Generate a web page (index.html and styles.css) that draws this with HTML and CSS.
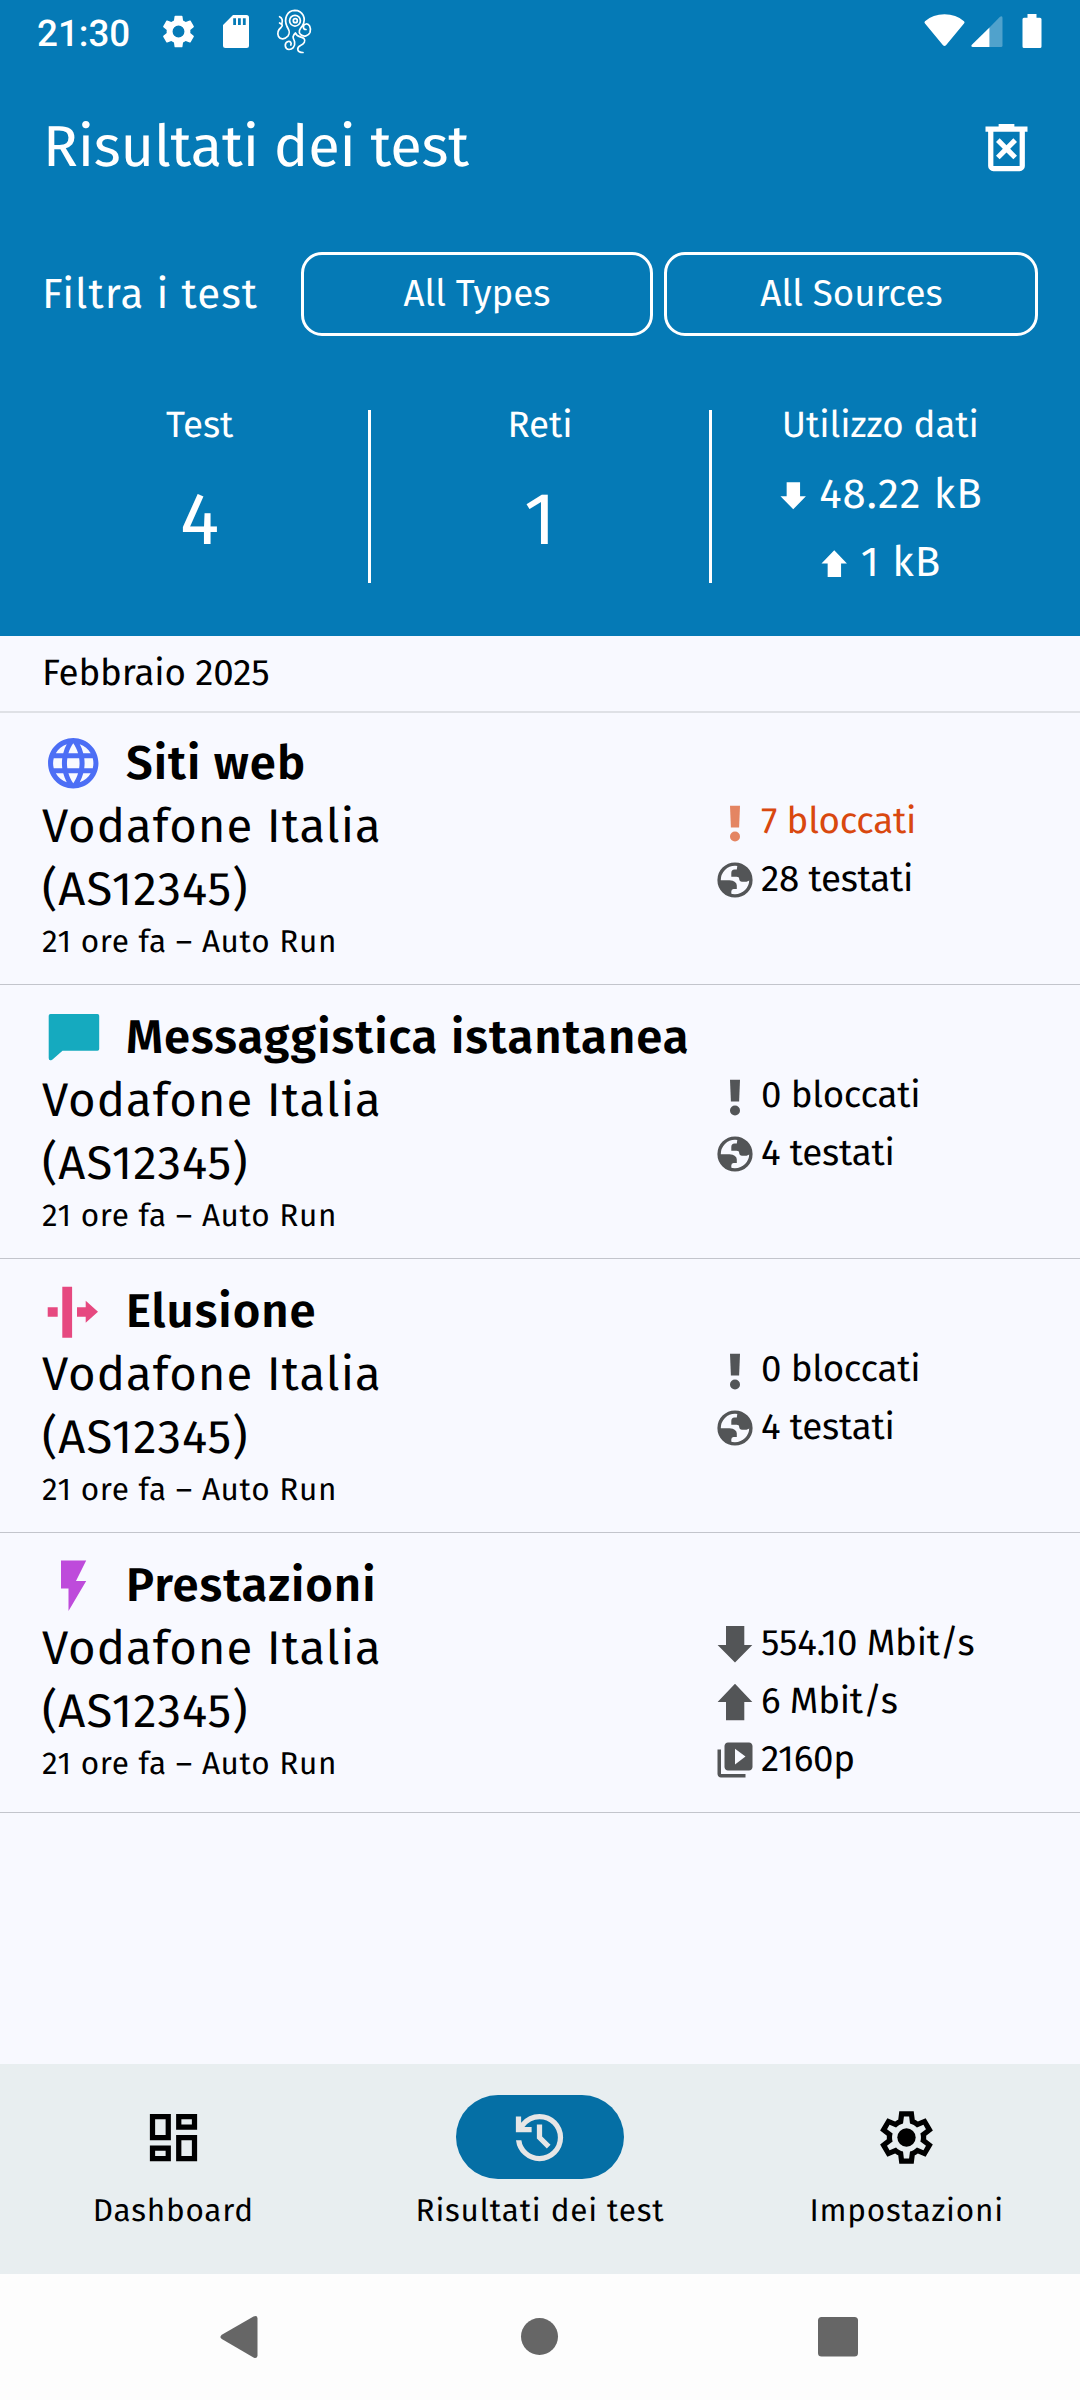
FILE: index.html
```html
<!DOCTYPE html>
<html lang="it">
<head>
<meta charset="utf-8">
<title>Risultati dei test</title>
<link rel="stylesheet" href="styles.css">
</head>
<body>
<svg class="sprite" aria-hidden="true">
  <symbol id="excl" viewBox="0 0 42 42"><path d="M16 4.700h10l-.9 21.800h-8.200z"/><circle cx="21" cy="35.500" r="5"/></symbol>
  <symbol id="world" viewBox="0 0 42 42"><circle cx="21" cy="21" r="15.900" fill="none" stroke="currentColor" stroke-width="3.400"/><path d="M23.500 5.500 22.800 10.600H20.500Q17.300 11 17.300 14V17.700H22.500Q25.200 17.700 25.200 20Q25.500 22.800 28 22.800H32.500L36.500 21V17L33 9.500L28 6.200ZM5 21.300H15.500Q22.800 22 22.800 26.500V30H19.500Q17.300 30.300 17.300 32.500V37L11 34L6 27Z"/></symbol>
  <symbol id="down" viewBox="0 0 42 42"><path d="M12 3h18.300v19H38.300L21 39.500 3.600 22H12z"/></symbol>
  <symbol id="up" viewBox="0 0 42 42"><path d="M12 39.200h18.300V21H38.300L21 2.700 3.600 21H12z"/></symbol>
</svg>

<header class="header">
  <div class="status">
    <span class="clock">21:30</span>
    <svg class="st-gear" viewBox="2 2 20 20"><path d="M19.140 12.940c.04-.3.06-.61.06-.94 0-.32-.02-.64-.07-.94l2.030-1.580c.18-.14.23-.41.12-.61l-1.920-3.320c-.12-.22-.37-.29-.59-.22l-2.390.96c-.5-.38-1.030-.7-1.620-.94l-.36-2.540c-.04-.24-.24-.41-.48-.41h-3.840c-.24 0-.43.17-.47.41l-.36 2.540c-.59.24-1.130.57-1.620.94l-2.390-.96c-.22-.08-.47 0-.59.22L2.740 8.870c-.12.21-.08.47.12.61l2.030 1.580c-.05.3-.09.63-.09.94s.02.64.07.94l-2.030 1.580c-.18.14-.23.41-.12.61l1.920 3.320c.12.22.37.29.59.22l2.390-.96c.5.38 1.030.7 1.620.94l.36 2.540c.05.24.24.41.48.41h3.840c.24 0 .44-.17.47-.41l.36-2.540c.59-.24 1.130-.56 1.620-.94l2.390.96c.22.08.47 0 .59-.22l1.920-3.320c.12-.22.07-.47-.12-.61l-2.010-1.580zM12 15.600A3.600 3.600 0 1 1 12 8.400a3.600 3.600 0 0 1 0 7.200z"/></svg>
    <svg class="st-sd" viewBox="0 0 26 33"><path fill-rule="evenodd" d="M10 0H23.500Q26 0 26 2.500V30.500Q26 33 23.500 33H2.500Q0 33 0 30.500V10ZM10.200 3.300V10H13V3.300ZM15 3.300V10H17.800V3.300ZM19.900 3.300V10H22.700V3.300Z"/></svg>
    <svg class="st-octo" viewBox="0 0 35 45"><g fill="none" stroke="currentColor" stroke-width="1.700" stroke-linecap="round"><path d="M2.600 14C6 16 5.800 16.500 4 18.500C1 21 0 24 1.500 27.500C3.500 31 8 30.500 11 27C14 23 11.500 20.500 10 17.500C6.500 10 10 1.500 17.800 1.300C26 1.300 29.500 10 25.500 16.500C22.500 20.500 21 23 23.500 25.500C27 28.300 31.500 27 33 23.500C34.500 18.500 32 14.500 29 15C25.500 15.500 25.500 20.500 29 20.500" class="arms"/><circle cx="18" cy="11.700" r="5.400"/><circle cx="18.300" cy="11.700" r="2"/><path d="M18.500 24C14 28 17 29.500 17.600 33C18.500 38 15 40.500 12 40.500C7.500 40 7 34 11 32.500C13.500 32 14.800 34 13.800 36M18.500 24C20 28.500 24 27 27 29.500C29 32 27 35 23.500 36.500C19.500 38.500 19.500 43.500 26 43.500M2.600 7.700Q6.500 9.500 4.800 15"/></g></svg>
    <span class="spacer"></span>
    <svg class="st-wifi" viewBox="0 0 41 33"><path d="M1 7.200Q9 .3 20.500.3T40 7.200Q41 8 40.200 9.200L22 31.200Q20.500 32.800 19 31.200L.8 9.200Q0 8 1 7.200Z"/></svg>
    <svg class="st-cell" viewBox="0 0 32 32"><path opacity=".3" d="M18.500 11.500 29 .8Q31.500-.8 31.500 2V29.500Q31.500 31 30 31H18.500Z"/><path d="M18.500 11.500V31H1.500Q-.5 30.500.6 28.900Z"/></svg>
    <svg class="st-batt" viewBox="0 0 20 34"><path d="M5.500 0h9v3.700H18Q19.500 3.700 19.500 5.200V32.500Q19.500 34 18 34H2Q.5 34 .5 32.500V5.200Q.5 3.700 2 3.700H5.500Z"/></svg>
  </div>

  <div class="appbar">
    <h1>Risultati dei test</h1>
    <svg class="ic63" viewBox="0 -960 960 960"><path d="m376-300 104-104 104 104 56-56-104-104 104-104-56-56-104 104-104-104-56 56 104 104-104 104 56 56Zm-96 180q-33 0-56.500-23.500T200-200v-520h-40v-80h200v-40h240v40h200v80h-40v520q0 33-23.500 56.500T680-120H280Zm400-600H280v520h400v-520Z"/></svg>
  </div>

  <div class="filters">
    <span class="filter-label">Filtra i test</span>
    <button class="chip chip-types">All Types</button>
    <button class="chip chip-sources">All Sources</button>
  </div>

  <div class="summary">
    <div class="stat"><div class="stat-name">Test</div><div class="stat-big">4</div></div>
    <div class="rule"></div>
    <div class="stat"><div class="stat-name">Reti</div><div class="stat-big">1</div></div>
    <div class="rule"></div>
    <div class="stat">
      <div class="stat-name">Utilizzo dati</div>
      <div class="data"><svg viewBox="3 2.500 36 37.500"><use href="#down" width="42" height="42"/></svg>48.22 kB</div>
      <div class="data"><svg viewBox="3 2.500 36 37.500"><use href="#up" width="42" height="42"/></svg>1 kB</div>
    </div>
  </div>
</header>

<main class="results">
  <h2 class="month">Febbraio 2025</h2>

  <article class="row">
    <h3 class="name"><svg class="web" viewBox="0 0 24 24"><path d="M11.990 2C6.470 2 2 6.480 2 12s4.470 10 9.990 10C17.520 22 22 17.520 22 12S17.520 2 11.990 2zm6.930 6h-2.950c-.32-1.250-.78-2.450-1.380-3.560 1.840.63 3.370 1.910 4.330 3.560zM12 4.040c.83 1.200 1.480 2.530 1.910 3.960h-3.820c.43-1.430 1.080-2.760 1.910-3.960zM4.260 14C4.100 13.360 4 12.690 4 12s.1-1.360.26-2h3.380c-.08.66-.14 1.320-.14 2s.06 1.340.14 2H4.260zm.82 2h2.950c.32 1.250.78 2.450 1.380 3.560-1.840-.63-3.370-1.900-4.330-3.560zm2.950-8H5.080c.96-1.660 2.490-2.930 4.330-3.560C8.810 5.550 8.350 6.750 8.030 8zM12 19.960c-.83-1.200-1.480-2.530-1.910-3.960h3.820c-.43 1.430-1.080 2.760-1.910 3.960zM14.340 14H9.660c-.09-.66-.16-1.320-.16-2s.07-1.350.16-2h4.680c.09.65.16 1.320.16 2s-.07 1.340-.16 2zm.25 5.560c.6-1.110 1.060-2.310 1.380-3.560h2.950c-.96 1.650-2.490 2.930-4.330 3.560zM16.360 14c.08-.66.14-1.320.14-2s-.06-1.340-.14-2h3.380c.16.64.26 1.310.26 2s-.1 1.360-.26 2h-3.380z"/></svg>Siti web</h3>
    <div class="body">
      <div class="info"><p class="net">Vodafone Italia<br>(AS12345)</p><p class="when">21 ore fa – Auto Run</p></div>
      <ul class="counts">
        <li class="alert"><svg><use href="#excl"/></svg>7 bloccati</li>
        <li><svg><use href="#world"/></svg>28 testati</li>
      </ul>
    </div>
  </article>

  <article class="row">
    <h3 class="name"><svg class="im" viewBox="0 0 63 63"><path d="M8.500 8H55.500Q57.200 8 57.200 9.700V43Q57.200 44.700 55.500 44.700H20.500L10.500 53.500Q6.700 55.800 6.700 52V9.700Q6.700 8 8.500 8Z"/></svg>Messaggistica istantanea</h3>
    <div class="body">
      <div class="info"><p class="net">Vodafone Italia<br>(AS12345)</p><p class="when">21 ore fa – Auto Run</p></div>
      <ul class="counts">
        <li><svg><use href="#excl"/></svg>0 bloccati</li>
        <li><svg><use href="#world"/></svg>4 testati</li>
      </ul>
    </div>
  </article>

  <article class="row">
    <h3 class="name"><svg class="circ" viewBox="0 0 63 63"><path d="M5.700 27.200h10v9.500h-10zM20.300 6.700h9.800v51h-9.800zM35 27.200h8.700V20.700L56 31.800 43.700 42.700V36.700H35z"/></svg>Elusione</h3>
    <div class="body">
      <div class="info"><p class="net">Vodafone Italia<br>(AS12345)</p><p class="when">21 ore fa – Auto Run</p></div>
      <ul class="counts">
        <li><svg><use href="#excl"/></svg>0 bloccati</li>
        <li><svg><use href="#world"/></svg>4 testati</li>
      </ul>
    </div>
  </article>

  <article class="row row-last">
    <h3 class="name"><svg class="perf" viewBox="0 0 63 63"><path d="M19 6.500H44.200L34 27H44.200L26.500 57V34.500H19z"/></svg>Prestazioni</h3>
    <div class="body">
      <div class="info"><p class="net">Vodafone Italia<br>(AS12345)</p><p class="when">21 ore fa – Auto Run</p></div>
      <ul class="counts">
        <li><svg><use href="#down"/></svg>554.10 Mbit/s</li>
        <li><svg><use href="#up"/></svg>6 Mbit/s</li>
        <li><svg viewBox="0 0 24 24"><path d="M4 6H2v14c0 1.100.9 2 2 2h14v-2H4V6zm16-4H8c-1.100 0-2 .9-2 2v12c0 1.100.9 2 2 2h12c1.100 0 2-.9 2-2V4c0-1.100-.9-2-2-2zm-8 12.500v-9l6 4.500-6 4.500z"/></svg>2160p</li>
      </ul>
    </div>
  </article>
</main>

<nav class="tabs">
  <a class="tab"><span class="pill"><svg class="ic63" viewBox="0 0 24 24"><path fill-rule="evenodd" d="M3 3h8v10H3zM5 5v6h4V5zM13 3h8v6h-8zM15 5v2h4V5zM13 11h8v10h-8zM15 13v6h4v-6zM3 15h8v6H3zM5 17v2h4v-2z"/></svg></span>Dashboard</a>
  <a class="tab"><span class="pill pill-on"><svg class="ic63" viewBox="0 -960 960 960"><path d="M480-120q-138 0-240.500-91.500T122-440h82q14 104 92.500 172T480-200q117 0 198.500-81.500T760-480q0-117-81.500-198.500T480-760q-69 0-129 32t-101 88h110v80H120v-240h80v94q51-64 124.500-99T480-840q75 0 140.500 28.500t114 77q48.500 48.500 77 114T840-480q0 75-28.500 140.500t-77 114q-48.500 48.500-114 77T480-120Zm112-192L440-464v-216h80v184l128 128-56 56Z"/></svg></span>Risultati dei test</a>
  <a class="tab"><span class="pill"><svg class="ic63" viewBox="0 -960 960 960"><path d="m370-80-16-128q-13-5-24.500-12T307-235l-119 50L78-375l103-78q-1-7-1-13.500v-27q0-6.500 1-13.500L78-585l110-190 119 50q11-8 23-15t24-12l16-128h220l16 128q13 5 24.500 12t22.500 15l119-50 110 190-103 78q1 7 1 13.500v27q0 6.500-2 13.500l103 78-110 190-118-50q-11 8-23 15t-24 12L590-80H370Zm70-80h79l14-106q31-8 57.500-23.500T639-327l99 41 39-68-86-65q5-14 7-29.500t2-31.500q0-16-2-31.500t-7-29.500l86-65-39-68-99 42q-22-23-48.500-38.500T533-694l-13-106h-79l-14 106q-31 8-57.500 23.500T321-633l-99-41-39 68 86 64q-5 15-7 30t-2 32q0 16 2 31t7 30l-86 65 39 68 99-42q22 23 48.500 38.500T427-266l13 106Z"/><circle cx="480" cy="-480" r="140"/></svg></span>Impostazioni</a>
</nav>

<footer class="sysnav">
  <svg viewBox="0 0 42 42"><path d="M3.800 18.700 35.500.6Q39.500-1 39.500 2.500V39.500Q39.500 43 35.500 41.400L3.800 23Q1 21 3.800 18.700Z"/></svg>
  <svg viewBox="0 0 42 42"><circle cx="22.500" cy="20.500" r="18.500"/></svg>
  <svg viewBox="0 0 42 42"><rect x="1" y="1" width="40" height="39.500" rx="3.500"/></svg>
</footer>
</body>
</html>
```
FILE: styles.css
```css
* { box-sizing: border-box; margin: 0; padding: 0; }

body {
  width: 1080px;
  height: 2400px;
  display: flex;
  flex-direction: column;
  background: #f8f9ff;
  color: #000;
  font-family: "Fira Sans", "Noto Sans", sans-serif;
  font-size: 36.75px;
  text-rendering: geometricPrecision;
  overflow: hidden;
}

svg { display: block; flex: none; fill: currentColor; overflow: visible; }
.sprite { position: absolute; width: 0; height: 0; }
.ic63 { width: 63px; height: 63px; }

/* Header */
.header { height: 636px; flex: none; background: #057ab6; color: #fff; }

.status { height: 63px; display: flex; align-items: flex-start; padding: 0 38px 0 37px; }
.clock {
  width: 124.500px;
  padding-top: 2px;
  font-family: Roboto, sans-serif;
  font-weight: 500;
  line-height: 63px;
}
.spacer { flex: 1; }
.st-gear { width: 33px; height: 33px; margin-top: 15px; }
.st-sd { width: 26px; height: 33px; margin: 15px 0 0 28px; }
.st-octo { width: 35px; height: 45px; margin: 9px 0 0 28px; }
.st-wifi { width: 41px; height: 33px; margin-top: 14px; }
.st-cell { width: 32px; height: 32px; margin: 16px 0 0 5.500px; }
.st-batt { width: 20px; height: 34px; margin: 14px 0 0 19.500px; }

.appbar {
  height: 168px;
  display: flex;
  align-items: center;
  justify-content: space-between;
  padding: 0 42px 0 43px;
}
.appbar h1 {
  padding-top: 2px;
  font-size: 57.750px;
  font-weight: 400;
  line-height: 73.500px;
  letter-spacing: -.22px;
}

.filters { height: 126px; display: flex; align-items: center; padding: 0 42px; }
.filter-label { width: 259px; padding-top: 2px; font-size: 42px; letter-spacing: 1.050px; }
.chip {
  height: 84px;
  border: 3px solid #fff;
  border-radius: 21px;
  background: none;
  color: inherit;
  font: inherit;
}
.chip-types { width: 352px; margin-right: 11px; }
.chip-sources { width: 374px; padding-left: 1px; }

.summary { display: flex; align-items: flex-start; padding: 53px 31px 0; }
.rule { width: 3px; height: 173px; background: #fff; }
.stat { flex: 1; text-align: center; }
.stat-name { margin-bottom: 21px; line-height: 30px; letter-spacing: -.05px; }
.stat-big { font-size: 73.500px; line-height: 118px; }
.data {
  display: flex;
  align-items: center;
  justify-content: center;
  gap: 13px;
  padding-left: 2px;
  font-size: 42px;
  line-height: 68px;
  letter-spacing: 1.050px;
}
.data svg { width: 26.500px; height: 27.500px; margin-top: 2px; }

/* Result list */
.results { flex: 1; }
.month {
  height: 77px;
  margin-bottom: -2px;
  padding-left: 42px;
  border-bottom: 2px solid #dfe1e6;
  font-size: 36.750px;
  font-weight: 400;
  line-height: 74px;
  letter-spacing: -.18px;
}
.row { height: 274px; padding-top: 20.500px; border-bottom: 1px solid #c3c5cc; }
.row-last { height: 280px; }
.name {
  display: flex;
  align-items: center;
  gap: 21px;
  padding-left: 42px;
  font-size: 47.250px;
  font-weight: 600;
  line-height: 63px;
  letter-spacing: 1px;
}
.name svg { width: 63px; height: 63px; }
.name .web { width: 60.500px; height: 60.500px; margin: 0 1.250px; color: #4c6ef5; }
.im { color: #15aabf; }
.circ { color: #e64980; }
.perf { color: #be4bdb; }

.body { display: flex; align-items: flex-start; padding-left: 42px; }
.info { width: 672px; }
.net { font-size: 47.250px; line-height: 63px; letter-spacing: 1.030px; }
.when { padding-top: 1px; font-size: 31.500px; line-height: 42px; letter-spacing: .66px; }
.counts { margin-top: -3px; list-style: none; }
.counts li { display: flex; align-items: center; gap: 5px; line-height: 58px; letter-spacing: -.25px; }
.counts svg { width: 42px; height: 42px; margin-top: 3px; color: #535557; }
.counts .alert { color: #d9480f; }
.counts .alert svg { color: #e48562; }

/* Bottom navigation */
.tabs {
  height: 210px;
  flex: none;
  display: grid;
  grid-template-columns: repeat(3, 1fr);
  gap: 20px;
  padding-top: 31px;
  background: #e8eef0;
}
.tab {
  display: flex;
  flex-direction: column;
  align-items: center;
  font-size: 31.500px;
  line-height: 42px;
  letter-spacing: .8px;
}
.pill {
  width: 168px;
  height: 84px;
  display: flex;
  align-items: center;
  justify-content: center;
  margin-bottom: 11.500px;
  border-radius: 42px;
}
.pill-on { background: #056fa5; color: #e6e6e6; }

/* System navigation */
.sysnav {
  height: 126px;
  flex: none;
  display: flex;
  align-items: center;
  justify-content: space-between;
  padding: 0 221px 0 217.500px;
  background: #fdfdfd;
  color: #666;
}
.sysnav svg { width: 42px; height: 42px; }
```
